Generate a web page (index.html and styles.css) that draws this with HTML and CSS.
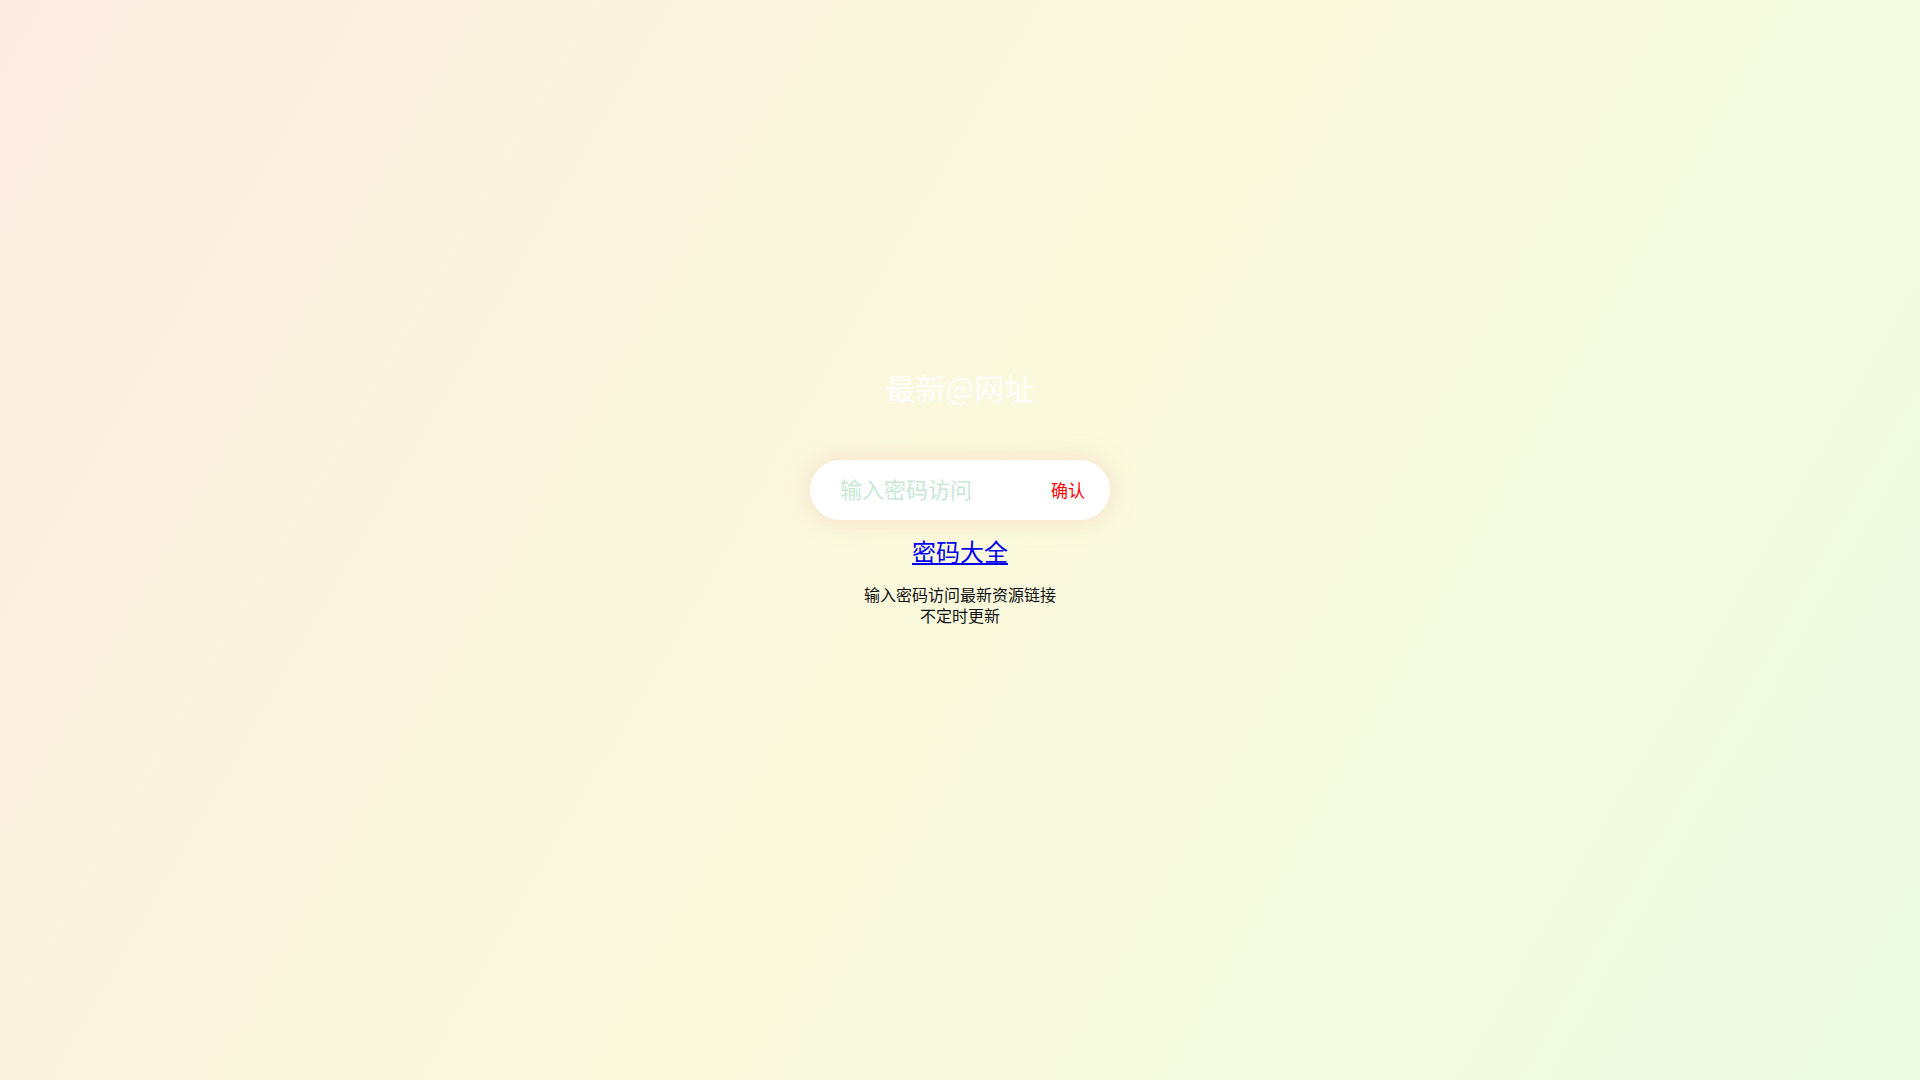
FILE: index.html
```html
<!DOCTYPE html>
<html lang="zh-CN">
<head>
<meta charset="utf-8">
<title>最新@网址</title>
<link rel="stylesheet" href="styles.css">
</head>
<body>
<main class="page">
  <h1 class="title">最新@网址</h1>
  <form class="pill" onsubmit="return false;">
    <input class="pill-input" type="password" placeholder="输入密码访问">
    <button class="pill-btn" type="submit">确认</button>
  </form>
  <a class="link" href="#">密码大全</a>
  <p class="desc">输入密码访问最新资源链接<br>不定时更新</p>
</main>
</body>
</html>
```
FILE: styles.css
```css
html, body {
  margin: 0;
  padding: 0;
  height: 100%;
}
body {
  background: linear-gradient(120deg, #fcebe2 0%, #fbf6de 35%, #fbf9dc 50%, #f5fbe0 72%, #edfbe5 100%);
  font-family: "Noto Sans CJK SC", "Noto Sans", sans-serif;
}
.page {
  display: flex;
  flex-direction: column;
  align-items: center;
  padding-top: 367px;
}
.title {
  margin: 0;
  font-size: 30px;
  line-height: 40px;
  font-weight: 400;
  color: #ffffff;
}
.pill {
  margin-top: 53px;
  width: 300px;
  height: 60px;
  box-sizing: border-box;
  background: #ffffff;
  border-radius: 30px;
  box-shadow: 0 0 22px rgba(240, 200, 180, 0.55);
  display: flex;
  align-items: center;
  padding: 0 25px 0 30px;
}
.pill-input {
  flex: 1;
  min-width: 0;
  border: none;
  outline: none;
  background: transparent;
  font-family: inherit;
  font-size: 22px;
  padding: 0 0 4px;
  color: #333;
}
.pill-input::placeholder {
  color: #c8e8d4;
}
.pill-btn {
  border: none;
  background: transparent;
  padding: 0 0 2px;
  font-family: inherit;
  font-size: 17px;
  color: #ff0000;
  cursor: pointer;
}
.link {
  margin-top: 16px;
  font-size: 24px;
  line-height: 30px;
  color: #0000ee;
  text-decoration: underline;
}
.desc {
  margin: 18px 0 0;
  font-size: 16px;
  line-height: 21px;
  text-align: center;
  color: #111;
}
```
